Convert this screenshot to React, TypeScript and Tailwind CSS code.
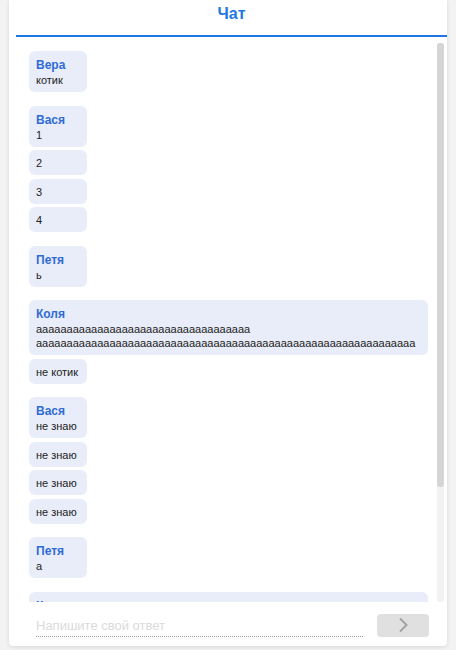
import React from "react";

type Msg = { author: string; texts: string[] };

const longA = "а".repeat(35) + " " + "а".repeat(62);

const messages: Msg[] = [
  { author: "Вера", texts: ["котик"] },
  { author: "Вася", texts: ["1", "2", "3", "4"] },
  { author: "Петя", texts: ["ь"] },
  { author: "Коля", texts: [longA, "не котик"] },
  { author: "Вася", texts: ["не знаю", "не знаю", "не знаю", "не знаю"] },
  { author: "Петя", texts: ["а"] },
  { author: "Коля", texts: [longA, "ну"] },
];

const MessageGroup = ({ msg }: { msg: Msg }) => (
  <div className="flex flex-col items-start gap-[3.5px]">
    {msg.texts.map((text, i) => (
      <div
        key={i}
        className="min-w-[58px] max-w-full rounded-[6px] bg-[#e9edf9] px-[7px] pt-[6px] pb-[5px]"
      >
        {i === 0 && (
          <div className="text-[12px] leading-[16px] font-bold text-[#2f6bd5]">{msg.author}</div>
        )}
        <div className="text-[11px] leading-[14px] text-[#222] break-words">{text}</div>
      </div>
    ))}
  </div>
);

const App = () => {
  return (
    <div
      className="h-[650px] bg-[#f3f3f3] px-[9px] overflow-hidden"
      style={{ fontFamily: '"Liberation Sans", Arial, sans-serif' }}
    >
      <div className="flex h-[646px] flex-col rounded-b-[4px] bg-white shadow-[0_1px_4px_rgba(0,0,0,0.12)]">
        <div className="ml-[7px] flex h-[37px] items-center justify-center border-b-2 border-b-[#1e78e4] pb-[7px]">
          <h1 className="text-[16px] font-bold text-[#1e78e4]">Чат</h1>
        </div>

        <div className="mt-[6px] ml-[7px] flex h-[559px]">
          <div className="flex-1 overflow-y-scroll pl-[13px] pr-[9px] pt-[8px] pb-[12px] [scrollbar-width:none]">
            <div className="flex flex-col gap-[13.5px]">
              {messages.map((m, i) => (
                <MessageGroup key={i} msg={m} />
              ))}
            </div>
          </div>
          <div className="mr-[3px] w-[7px] rounded-[3px] bg-[#f2f2f2]">
            <div className="h-[444px] rounded-[3px] bg-[#d5d5d5]" />
          </div>
        </div>

        <div className="flex flex-1 items-center pl-[27px] pr-[18px] pt-[2px]">
          <input
            className="h-[24px] w-[327px] border-b border-dotted border-[#9a9a9a] bg-transparent pt-[2px] text-[13px] leading-[18px] text-[#333] outline-none placeholder:text-[#dadada]"
            placeholder="Напишите свой ответ"
          />
          <button className="ml-auto flex h-[23px] w-[52px] items-center justify-center rounded-[4px] bg-[#e0e0e0]">
            <svg width="10" height="16" viewBox="0 0 10 16" fill="none">
              <polyline points="2,1.5 8.5,8 2,14.5" stroke="#a3a3a3" strokeWidth="2" />
            </svg>
          </button>
        </div>
      </div>
    </div>
  );
};

export default App;
